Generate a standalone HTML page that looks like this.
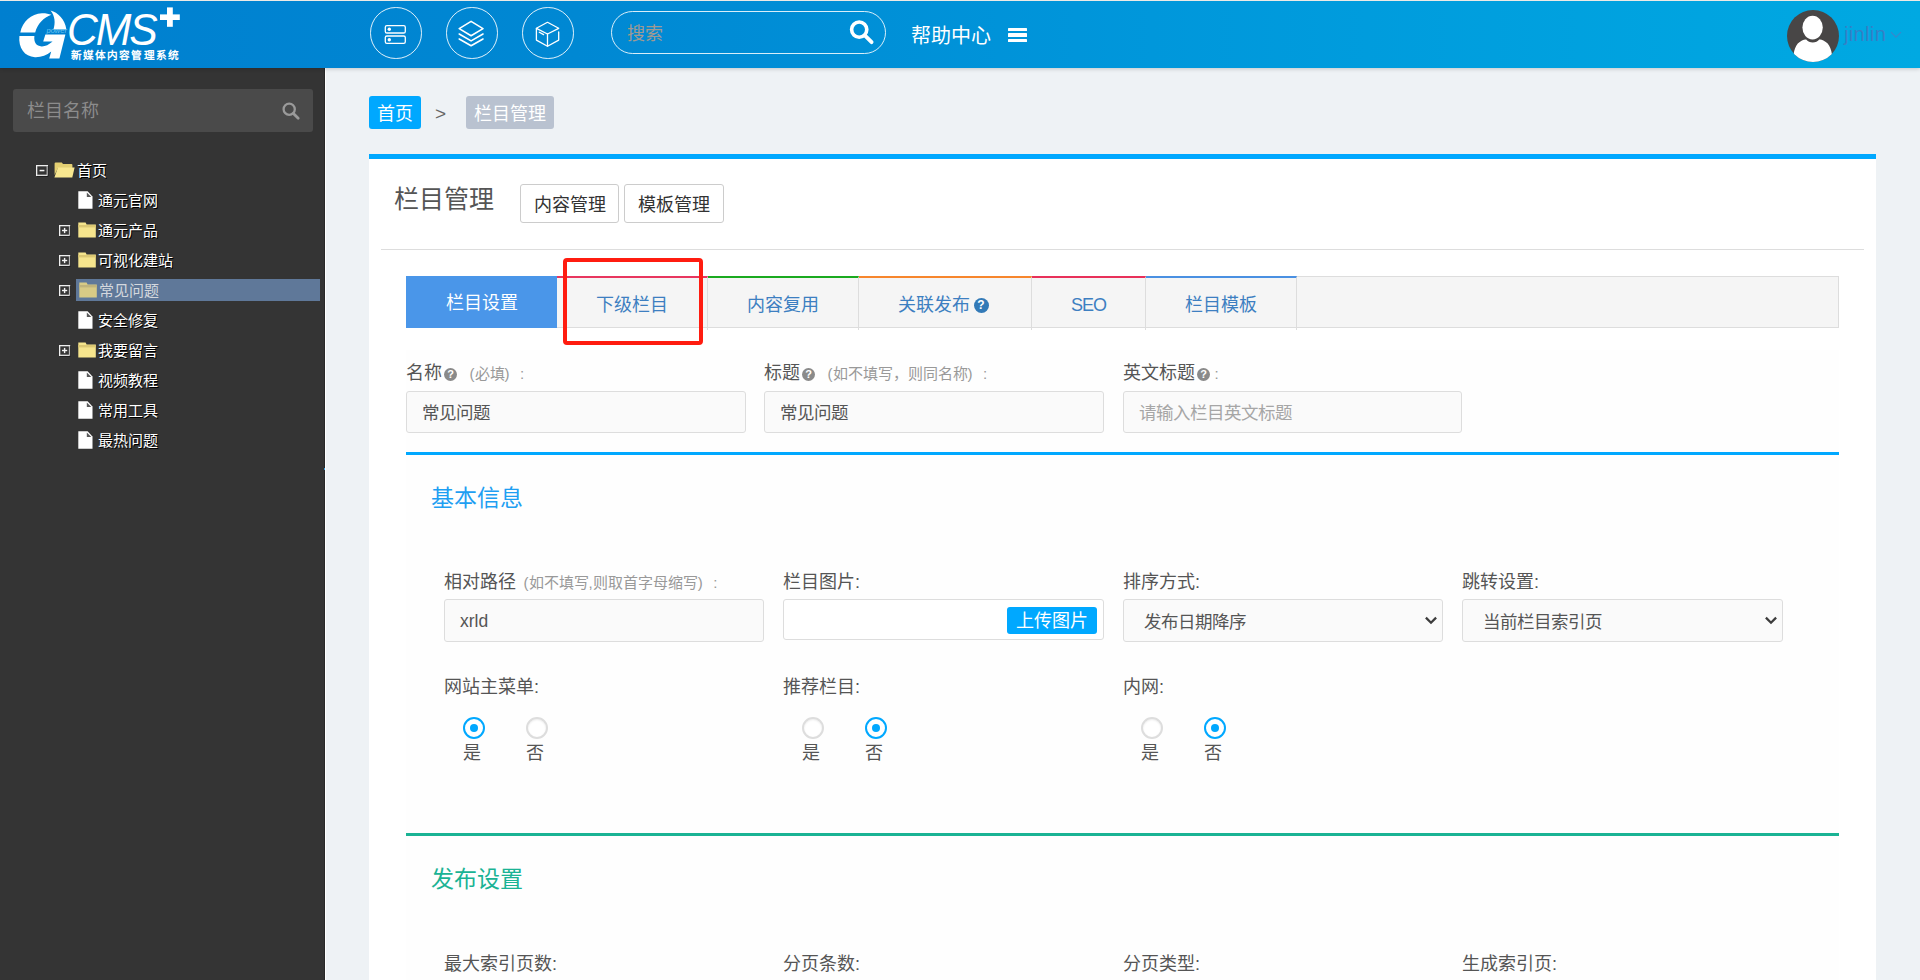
<!DOCTYPE html>
<html lang="zh-CN">
<head>
<meta charset="utf-8">
<title>栏目管理</title>
<style>
*{box-sizing:border-box;margin:0;padding:0}
html,body{width:1920px;height:980px;overflow:hidden}
body{position:relative;background:#eef2f5;font-family:"Liberation Sans",sans-serif;color:#555;font-size:18px}
.abs{position:absolute}
.t{position:absolute;white-space:nowrap;line-height:1}
/* header */
#hdr{position:absolute;left:0;top:0;width:1920px;height:68px;background:linear-gradient(90deg,#007fcf 0%,#0088d3 30%,#0097db 60%,#00a9e2 100%);border-top:1px solid #eceae6;box-shadow:0 1px 4px rgba(0,0,0,.18);z-index:5}
.circ{position:absolute;top:6px;width:51.5px;height:51.5px;border:1px solid rgba(255,255,255,.88);border-radius:50%}
.circ svg{position:absolute;left:-.6px;top:-.3px}
#srch{position:absolute;left:611px;top:10px;width:275px;height:43px;border:1px solid rgba(255,255,255,.85);border-radius:22px}
/* sidebar */
#side{position:absolute;left:0;top:68px;width:326px;height:912px;background:#343434;border-right:1px solid #fff}
#side:after{content:"";position:absolute;left:324px;top:0;width:1px;height:912px;background:#282828}
#sbox{position:absolute;left:13px;top:21px;width:300px;height:43px;background:#4a4a4a;border-radius:3px}
.tr{position:absolute;height:22px;line-height:22px;font-size:15px;color:#fff;white-space:nowrap;text-shadow:1px 1px 0 #000}
.pm{position:absolute;width:12px;height:11px;border:1px solid #ececec;outline:0;box-shadow:1px 1px 0 #111, inset 0 0 0 .4px #ececec}
.pm:before{content:"";position:absolute;left:2.5px;top:4px;width:5px;height:1px;background:#f4f4f4;box-shadow:0 .5px 0 #f4f4f4}
.pm.plus{width:11.5px}
.pm.plus:after{content:"";position:absolute;left:4.3px;top:2px;width:1px;height:5px;background:#f4f4f4;box-shadow:.5px 0 0 #f4f4f4}
/* main */
#card{position:absolute;left:369px;top:154px;width:1507px;height:826px;background:#fff;border-top:5px solid #00a8ff}
.btn{position:absolute;top:184px;height:39px;border:1px solid #ccc;border-radius:3px;background:#fff;color:#333;font-size:18px;line-height:40px;text-align:center}
#tabs{position:absolute;left:406px;top:276px;width:1433px;height:52px;background:#f5f5f5;border:1px solid #ddd}
.tab{position:absolute;top:276px;height:54px;border-top:2px solid #000;border-right:1px solid #ddd;color:#3d7fc1;font-size:18px;text-align:center;line-height:54px;white-space:nowrap}
.lab{position:absolute;white-space:nowrap;font-size:18px;line-height:20px;color:#555}
.lab small{font-size:15px;color:#999;margin-left:7.5px}
.lab small i{font-style:normal;margin-left:10.5px}
.inp{position:absolute;height:42px;border:1px solid #ddd;border-radius:3px;background:#fafafa;font-size:17.5px;line-height:42px;color:#555;padding-left:15px;white-space:nowrap}
.q{display:inline-block;width:13px;height:13px;border-radius:50%;background:#8a8a8a;color:#fff;font-size:11px;font-weight:bold;line-height:13px;text-align:center;vertical-align:1px;margin-left:2px}
.rad{position:absolute;width:22px;height:22px;border-radius:50%;border:2px solid #ddd;background:#fff;box-shadow:inset 0 1px 2px rgba(0,0,0,.08)}
.rad.on{border:2.5px solid #00a8ff;box-shadow:none}
.rad.on:after{content:"";position:absolute;left:50%;top:50%;width:8px;height:8px;margin:-4px 0 0 -4px;border-radius:50%;background:#00a8ff}
.rl{position:absolute;font-size:18px;line-height:20px;color:#555}
</style>
</head>
<body>
<div id="hdr">
<svg class="abs" style="left:0;top:-1px" width="200" height="68" viewBox="0 0 200 68">
<g fill="#fff">
<path d="M20.3 32.4 C22.5 22 31 13.6 42 13.3 C45.5 13.2 48.5 13.8 51.4 14.8 C43.5 17.5 37.5 24 35.2 32.4 Z"/>
<path d="M50.5 10.6 C58 12.5 65 19.5 66.4 29.6 L53.4 29.6 C55.6 23 55 16 50.5 10.6 Z"/>
<path d="M19.4 36.1 L34.4 36.1 C33.6 42.5 36.5 46.6 42 46.4 C45.6 46.2 48.8 44.6 52.6 41.4 L43.2 41.6 L45.4 34.6 L65.4 34.6 L59.4 58.4 L49.2 58.4 L51.2 51.6 C46.5 55.6 41 57.4 35 57.2 C24.5 56.8 18.2 48 19.4 36.1 Z"/>
</g>
<text x="46.5" y="32.6" font-family="Liberation Sans, sans-serif" font-style="italic" font-size="7.4" fill="#6cc6f2" textLength="20.5" lengthAdjust="spacingAndGlyphs">power</text>
<rect x="160" y="14.4" width="19.8" height="5.6" fill="#fff"/>
<rect x="167" y="7.4" width="5.8" height="19.4" fill="#fff"/>
</svg>
<div class="t" style="left:67px;top:7px;font-size:44px;font-style:italic;color:#fff;letter-spacing:-2.2px;line-height:44px;transform-origin:0 0;transform:scaleX(.972)">CMS</div>
<div class="t" style="left:70.5px;top:48px;font-size:10.6px;font-weight:bold;color:#fff;letter-spacing:1.18px;line-height:12px">新媒体内容管理系统</div>
<div class="circ" style="left:370px"><svg width="50" height="50" viewBox="0 0 50 50" fill="none" stroke="#fff" stroke-width="1.3"><rect x="15.3" y="17.6" width="20" height="7.4" rx="1.6"/><rect x="15.3" y="28" width="20" height="7.4" rx="1.6"/><circle cx="19.3" cy="21.3" r="1.7" fill="#fff" stroke="none"/><circle cx="19.3" cy="31.7" r="1.7" fill="#fff" stroke="none"/></svg></div>
<div class="circ" style="left:446px"><svg width="50" height="50" viewBox="0 0 50 50" fill="none" stroke="#fff" stroke-width="1.6" stroke-linejoin="round" stroke-linecap="round"><path d="M25.1 13.4 L37 20.6 L25.1 27.8 L13.2 20.6 Z"/><path d="M13.2 26 L25.1 32.9 L37 26"/><path d="M13.2 31 L25.1 37.8 L37 31"/></svg></div>
<div class="circ" style="left:522px"><svg width="50" height="50" viewBox="0 0 50 50" fill="none" stroke="#fff" stroke-width="1.3" stroke-linejoin="round" stroke-linecap="round"><path d="M25.5 14.3 L36.7 20.3 L25.5 26 L14.4 20.3 Z"/><path d="M14.4 20.3 L14.4 32.1 L25.5 38.2 L36.7 32.1 L36.7 24"/><path d="M25.5 26 L25.5 38.2"/><path d="M17.3 24.2 L21.6 26.6"/></svg></div>
<div id="srch"></div>
<div class="t" style="left:627px;top:22.5px;font-size:18px;color:#a09a92;line-height:20px">搜索</div>
<svg class="abs" style="left:847.5px;top:17px" width="27" height="27" viewBox="0 0 27 27"><circle cx="11.2" cy="11.6" r="7.6" fill="none" stroke="#fff" stroke-width="3.6"/><path d="M16.8 17.4 L23.6 24.2" stroke="#fff" stroke-width="3.8" stroke-linecap="round"/></svg>
<div class="t" style="left:911px;top:24px;font-size:20px;color:#fff;line-height:22px">帮助中心</div>
<div class="abs" style="left:1008px;top:26.5px;width:18.5px;height:3.4px;background:#fff;border-radius:.6px"></div>
<div class="abs" style="left:1008px;top:32.2px;width:18.5px;height:3.4px;background:#fff;border-radius:.6px"></div>
<div class="abs" style="left:1008px;top:37.8px;width:18.5px;height:3.4px;background:#fff;border-radius:.6px"></div>
<svg class="abs" style="left:1787px;top:9px" width="52" height="52" viewBox="0 0 52 52"><defs><clipPath id="avc"><circle cx="26" cy="26" r="26"/></clipPath></defs><circle cx="26" cy="26" r="26" fill="#484646"/><g clip-path="url(#avc)" fill="#fff"><ellipse cx="25.6" cy="17.6" rx="10.2" ry="11.8"/><path d="M6 56 C6 42 7.5 34 15 30.4 C17 29.5 18.3 29.2 19.2 29.6 C22 33.4 29.6 33.4 32.2 29.6 C33.2 29.2 34.6 29.5 36.4 30.4 C44 34 45.6 42 45.6 56 Z"/></g></svg>
<div class="t" style="left:1844px;top:22px;font-size:20px;color:#3580c6;line-height:22px;letter-spacing:.35px">jinlin</div>
<svg class="abs" style="left:1890px;top:30px" width="12" height="8" viewBox="0 0 12 8"><path d="M1 1.2 L6 6.2 L11 1.2" fill="none" stroke="#3a86cb" stroke-width="1.2"/></svg>
</div>
<div id="side">
<div id="sbox"></div>
<div class="abs" style="left:323.6px;top:400.4px;width:1.6px;height:1.6px;background:#3aa0e0;z-index:2"></div>
<div class="t" style="left:27px;top:33px;font-size:18px;line-height:20px;color:#8c8c8c">栏目名称</div>
<svg class="abs" style="left:281px;top:33px" width="20" height="20" viewBox="0 0 20 20"><circle cx="8.2" cy="8.2" r="5.6" fill="none" stroke="#9a9a9a" stroke-width="2.3"/><path d="M12.4 12.4 L17.2 17.2" stroke="#9a9a9a" stroke-width="2.8" stroke-linecap="round"/></svg>
<svg class="abs" style="left:36px;top:97px" width="13" height="12" viewBox="0 0 13 12"><rect x="0.65" y="0.65" width="10.7" height="9.7" fill="none" stroke="#efefef" stroke-width="1.3"/><rect x="3.6" y="4.8" width="4.8" height="1.5" fill="#f4f4f4"/><path d="M12 1 V11.4 H1" fill="none" stroke="#151515" stroke-width=".8"/></svg>
<svg class="abs" style="left:53.5px;top:94px" width="21" height="16" viewBox="0 0 21 16"><path d="M0.6 13 V1.4 Q0.6 0.4 1.6 0.4 H7.8 L9 2 H17.6 Q18.4 2 18.4 3 V6 H4 Z" fill="#e3cf72"/><path d="M3.9 5.4 H20.6 L18.3 15.6 H0.4 Z" fill="#f8e78f"/></svg>
<div class="tr" style="left:76.5px;top:92px">首页</div>
<svg class="abs" style="left:78px;top:123px" width="15" height="18" viewBox="0 0 15 18"><path d="M0.3 0.3 H9.6 L14.5 5.4 V17.8 H0.3 Z" fill="#fff"/><path d="M8.8 1.4 L13.3 6 H8.8 Z" fill="#5a5a5a"/></svg>
<div class="tr" style="left:98px;top:122px">通元官网</div>
<svg class="abs" style="left:59px;top:157.2px" width="13" height="12" viewBox="0 0 13 12"><rect x="0.65" y="0.65" width="9.9" height="9.7" fill="none" stroke="#efefef" stroke-width="1.3"/><rect x="3" y="4.8" width="5.2" height="1.4" fill="#f4f4f4"/><rect x="4.9" y="2.9" width="1.4" height="5.2" fill="#f4f4f4"/><path d="M11.2 1 V11.4 H1" fill="none" stroke="#151515" stroke-width=".8"/></svg>
<svg class="abs" style="left:78px;top:154px" width="18" height="16" viewBox="0 0 18 16"><path d="M0.3 0.4 H7.6 L8.6 2.4 H17.8 V15.4 H0.3 Z" fill="#f6e58d"/><rect x="0.3" y="3" width="17.5" height="2.4" fill="#dcc873"/></svg>
<div class="tr" style="left:98px;top:152px">通元产品</div>
<svg class="abs" style="left:59px;top:187.2px" width="13" height="12" viewBox="0 0 13 12"><rect x="0.65" y="0.65" width="9.9" height="9.7" fill="none" stroke="#efefef" stroke-width="1.3"/><rect x="3" y="4.8" width="5.2" height="1.4" fill="#f4f4f4"/><rect x="4.9" y="2.9" width="1.4" height="5.2" fill="#f4f4f4"/><path d="M11.2 1 V11.4 H1" fill="none" stroke="#151515" stroke-width=".8"/></svg>
<svg class="abs" style="left:78px;top:184px" width="18" height="16" viewBox="0 0 18 16"><path d="M0.3 0.4 H7.6 L8.6 2.4 H17.8 V15.4 H0.3 Z" fill="#f6e58d"/><rect x="0.3" y="3" width="17.5" height="2.4" fill="#dcc873"/></svg>
<div class="tr" style="left:98px;top:182px">可视化建站</div>
<div class="abs" style="left:76px;top:211px;width:244px;height:22px;background:#5f7899"></div>
<svg class="abs" style="left:59px;top:217.2px" width="13" height="12" viewBox="0 0 13 12"><rect x="0.65" y="0.65" width="9.9" height="9.7" fill="none" stroke="#efefef" stroke-width="1.3"/><rect x="3" y="4.8" width="5.2" height="1.4" fill="#f4f4f4"/><rect x="4.9" y="2.9" width="1.4" height="5.2" fill="#f4f4f4"/><path d="M11.2 1 V11.4 H1" fill="none" stroke="#151515" stroke-width=".8"/></svg>
<svg class="abs" style="left:79px;top:214px" width="18" height="16" viewBox="0 0 18 16"><path d="M0.3 0.4 H7.6 L8.6 2.4 H17.8 V15.4 H0.3 Z" fill="#d8cb86"/><rect x="0.3" y="3" width="17.5" height="2.4" fill="#c0b47c"/></svg>
<div class="tr" style="left:98px;top:212px;color:#d4d8de;text-shadow:none;margin-left:1px">常见问题</div>
<svg class="abs" style="left:78px;top:243px" width="15" height="18" viewBox="0 0 15 18"><path d="M0.3 0.3 H9.6 L14.5 5.4 V17.8 H0.3 Z" fill="#fff"/><path d="M8.8 1.4 L13.3 6 H8.8 Z" fill="#5a5a5a"/></svg>
<div class="tr" style="left:98px;top:242px">安全修复</div>
<svg class="abs" style="left:59px;top:277.2px" width="13" height="12" viewBox="0 0 13 12"><rect x="0.65" y="0.65" width="9.9" height="9.7" fill="none" stroke="#efefef" stroke-width="1.3"/><rect x="3" y="4.8" width="5.2" height="1.4" fill="#f4f4f4"/><rect x="4.9" y="2.9" width="1.4" height="5.2" fill="#f4f4f4"/><path d="M11.2 1 V11.4 H1" fill="none" stroke="#151515" stroke-width=".8"/></svg>
<svg class="abs" style="left:78px;top:274px" width="18" height="16" viewBox="0 0 18 16"><path d="M0.3 0.4 H7.6 L8.6 2.4 H17.8 V15.4 H0.3 Z" fill="#f6e58d"/><rect x="0.3" y="3" width="17.5" height="2.4" fill="#dcc873"/></svg>
<div class="tr" style="left:98px;top:272px">我要留言</div>
<svg class="abs" style="left:78px;top:303px" width="15" height="18" viewBox="0 0 15 18"><path d="M0.3 0.3 H9.6 L14.5 5.4 V17.8 H0.3 Z" fill="#fff"/><path d="M8.8 1.4 L13.3 6 H8.8 Z" fill="#5a5a5a"/></svg>
<div class="tr" style="left:98px;top:302px">视频教程</div>
<svg class="abs" style="left:78px;top:333px" width="15" height="18" viewBox="0 0 15 18"><path d="M0.3 0.3 H9.6 L14.5 5.4 V17.8 H0.3 Z" fill="#fff"/><path d="M8.8 1.4 L13.3 6 H8.8 Z" fill="#5a5a5a"/></svg>
<div class="tr" style="left:98px;top:332px">常用工具</div>
<svg class="abs" style="left:78px;top:363px" width="15" height="18" viewBox="0 0 15 18"><path d="M0.3 0.3 H9.6 L14.5 5.4 V17.8 H0.3 Z" fill="#fff"/><path d="M8.8 1.4 L13.3 6 H8.8 Z" fill="#5a5a5a"/></svg>
<div class="tr" style="left:98px;top:362px">最热问题</div>
</div>
<div class="abs" style="left:369px;top:96px;width:52px;height:33px;background:#00a8ff;border-radius:3px"></div>
<div class="t" style="left:377px;top:104px;font-size:18px;line-height:20px;color:#fff">首页</div>
<div class="t" style="left:435px;top:103.5px;font-size:19px;line-height:20px;color:#666">&gt;</div>
<div class="abs" style="left:466px;top:96px;width:88px;height:33px;background:#b9c2d0;border-radius:3px"></div>
<div class="t" style="left:474px;top:104px;font-size:18px;line-height:20px;color:#fff">栏目管理</div>
<div id="card"></div>
<div class="abs" style="left:406px;top:350px;width:1433px;height:630px;background:#fefefe"></div>
<div class="t" style="left:394px;top:186px;font-size:25px;line-height:27px;color:#555">栏目管理</div>
<div class="btn" style="left:520px;width:99px">内容管理</div>
<div class="btn" style="left:624px;width:100px">模板管理</div>
<div class="abs" style="left:381px;top:249px;width:1483px;height:1px;background:#ddd"></div>
<div id="tabs"></div>
<div class="tab" style="left:406px;width:151px;background:#4a96e9;border-top-color:#4a96e9;color:#fff;border-right:0;height:52px;line-height:50px">栏目设置</div>
<div class="tab" style="left:557px;width:151px;border-top-color:#e8365f">下级栏目</div>
<div class="tab" style="left:708px;width:151px;border-top-color:#1aaa1f">内容复用</div>
<div class="tab" style="left:859px;width:173px;border-top-color:#f7862c"><span style="padding-right:4px">关联发布<span class="q" style="width:15px;height:15px;line-height:15px;font-size:12px;background:#337ab7;vertical-align:2px;margin-left:4px">?</span></span></div>
<div class="tab" style="left:1032px;width:114px;border-top-color:#e8305a;letter-spacing:-1px">SEO</div>
<div class="tab" style="left:1146px;width:151px;border-top-color:#4a90e2">栏目模板</div>
<div class="abs" style="left:563px;top:258px;width:140px;height:87px;border:4px solid #ff1c10;border-radius:4px"></div>

<div class="lab" style="left:406px;top:363px">名称<span class="q">?</span> <small>(必填)<i>:</i></small></div>
<div class="lab" style="left:764px;top:363px">标题<span class="q">?</span> <small>(如不填写，则同名称)<i>:</i></small></div>
<div class="lab" style="left:1123px;top:363px">英文标题<span class="q">?</span><small style="margin-left:4.5px">:</small></div>
<div class="inp" style="left:406px;top:391px;width:340px">常见问题</div>
<div class="inp" style="left:764px;top:391px;width:340px">常见问题</div>
<div class="inp" style="left:1123px;top:391px;width:339px;color:#a6a6a6">请输入栏目英文标题</div>
<div class="abs" style="left:406px;top:452px;width:1433px;height:3px;background:#00a8ff"></div>
<div class="t" style="left:431px;top:486px;font-size:23px;line-height:25px;color:#1e9ff2">基本信息</div>

<div class="lab" style="left:444px;top:572px">相对路径 <small style="margin-left:2.5px">(如不填写,则取首字母缩写)<i>:</i></small></div>
<div class="lab" style="left:783px;top:572px">栏目图片:</div>
<div class="lab" style="left:1123px;top:572px">排序方式:</div>
<div class="lab" style="left:1462px;top:572px">跳转设置:</div>
<div class="inp" style="left:444px;top:599.3px;width:320px;height:42.6px">xrld</div>
<div class="inp" style="left:783px;top:599px;width:321px;height:41px;background:#fff"></div>
<div class="abs" style="left:1007px;top:607px;width:90px;height:27px;background:#00a8ff;border-radius:3px;color:#fff;font-size:18px;line-height:29px;text-align:center">上传图片</div>
<div class="inp" style="left:1123px;top:599.3px;width:320px;height:42.6px;padding-left:19.5px;line-height:44.5px">发布日期降序</div>
<div class="inp" style="left:1462px;top:599.3px;width:321px;height:42.6px;padding-left:19.5px;line-height:44.5px">当前栏目索引页</div>
<svg class="abs" style="left:1424px;top:616px" width="14" height="10" viewBox="0 0 14 10"><path d="M1.9 1.6 L7 6.7 L12.1 1.6" fill="none" stroke="#3c3c3c" stroke-width="2.3"/></svg>
<svg class="abs" style="left:1764px;top:616px" width="14" height="10" viewBox="0 0 14 10"><path d="M1.9 1.6 L7 6.7 L12.1 1.6" fill="none" stroke="#3c3c3c" stroke-width="2.3"/></svg>

<div class="lab" style="left:444px;top:677px">网站主菜单:</div>
<div class="lab" style="left:783px;top:677px">推荐栏目:</div>
<div class="lab" style="left:1123px;top:677px">内网:</div>
<div class="rad on" style="left:463px;top:717px"></div><div class="rad" style="left:526px;top:717px"></div>
<div class="rl" style="left:463px;top:743px">是</div><div class="rl" style="left:526px;top:743px">否</div>
<div class="rad" style="left:802px;top:717px"></div><div class="rad on" style="left:865px;top:717px"></div>
<div class="rl" style="left:802px;top:743px">是</div><div class="rl" style="left:865px;top:743px">否</div>
<div class="rad" style="left:1141px;top:717px"></div><div class="rad on" style="left:1204px;top:717px"></div>
<div class="rl" style="left:1141px;top:743px">是</div><div class="rl" style="left:1204px;top:743px">否</div>

<div class="abs" style="left:406px;top:833px;width:1433px;height:3px;background:#1ab394"></div>
<div class="t" style="left:431px;top:867px;font-size:23px;line-height:25px;color:#1ab394">发布设置</div>
<div class="lab" style="left:444px;top:954px">最大索引页数:</div>
<div class="lab" style="left:783px;top:954px">分页条数:</div>
<div class="lab" style="left:1123px;top:954px">分页类型:</div>
<div class="lab" style="left:1462px;top:954px">生成索引页:</div>

</body>
</html>
